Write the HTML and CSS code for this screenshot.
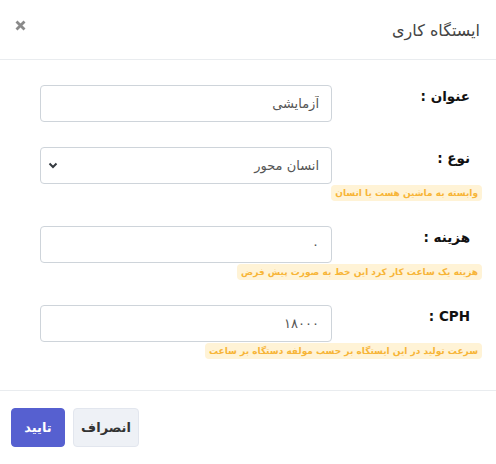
FILE: index.html
```html
<!DOCTYPE html>
<html lang="fa" dir="rtl">
<head>
<meta charset="utf-8">
<link rel="stylesheet" href="styles.css">
</head>
<body>
<div class="modal">
  <div class="modal-header">
    <h5 class="modal-title">ایستگاه کاری</h5>
    <button class="close" type="button" aria-label="Close">
      <svg width="11" height="11" viewBox="0 0 11 11"><path d="M1.5 1.5 L9.5 9.5 M9.5 1.5 L1.5 9.5" stroke="#8a8a8a" stroke-width="2.8" stroke-linecap="butt"/></svg>
    </button>
  </div>
  <div class="modal-body">
    <div class="group">
      <div class="row">
        <label class="label">عنوان :</label>
        <div class="field"><input class="input" type="text" value="آزمایشی"></div>
      </div>
    </div>
    <div class="group">
      <div class="row">
        <label class="label">نوع :</label>
        <div class="field">
          <div class="select">
            <span class="select-text">انسان محور</span>
            <svg class="chev" width="10" height="7" viewBox="0 0 10 7"><path d="M1.5 1.5 L5 5 L8.5 1.5" fill="none" stroke="#343a40" stroke-width="2"/></svg>
          </div>
        </div>
      </div>
      <div class="hint-row"><span class="hint">وابسته به ماشین هست یا انسان</span></div>
    </div>
    <div class="group">
      <div class="row">
        <label class="label">هزینه :</label>
        <div class="field"><input class="input" type="text" value="۰"></div>
      </div>
      <div class="hint-row"><span class="hint">هزینه یک ساعت کار کرد این خط به صورت پیش فرض</span></div>
    </div>
    <div class="group last">
      <div class="row">
        <label class="label">CPH :</label>
        <div class="field"><input class="input" type="text" value="۱۸۰۰۰"></div>
      </div>
      <div class="hint-row"><span class="hint">سرعت تولید در این ایستگاه بر حسب مولفه دستگاه بر ساعت</span></div>
    </div>
  </div>
  <div class="modal-footer">
    <button class="btn btn-primary" type="button">تایید</button>
    <button class="btn btn-cancel" type="button">انصراف</button>
  </div>
</div>
</body>
</html>
```
FILE: styles.css
```css
* { box-sizing: border-box; }
html, body {
  margin: 0;
  padding: 0;
  background: #ffffff;
}
body {
  font-family: "DejaVu Sans", "Noto Sans", sans-serif;
  color: #212529;
  width: 496px;
  height: 464px;
  overflow: hidden;
}
.modal {
  width: 496px;
  height: 464px;
  background: #fff;
  display: flex;
  flex-direction: column;
}
.modal-header {
  height: 60px;
  border-bottom: 1px solid #e9ecef;
  display: flex;
  align-items: center;
  justify-content: space-between;
  padding: 0 16px 0 15px;
}
.modal-title {
  margin: 0;
  font-size: 16px;
  font-weight: normal;
  color: #444;
  padding-top: 2px;
}
.close {
  border: 0;
  background: transparent;
  padding: 0;
  width: 11px;
  height: 11px;
  margin-bottom: 9px;
  display: flex;
  align-items: center;
  justify-content: center;
}
.modal-body {
  padding: 25px 14px 0 14px;
  height: 331px;
  border-bottom: 1px solid #e9ecef;
}
.group {
  margin-bottom: 25px;
}
.group.last { margin-bottom: 0; }
.row {
  display: flex;
  align-items: flex-start;
}
.label {
  width: 150px;
  padding-right: 12px;
  padding-top: 1px;
  font-weight: bold;
  font-size: 13.5px;
  line-height: 20px;
  color: #111;
}
.field {
  width: 292px;
}
.input, .select {
  width: 292px;
  height: 37px;
  border: 1px solid #ced4da;
  border-radius: 4px;
  padding: 0 12px;
  font-family: inherit;
  font-size: 13px;
  color: #555;
  text-align: right;
  direction: rtl;
  background: #fff;
  outline: none;
}
.select {
  display: flex;
  align-items: center;
  justify-content: space-between;
  padding: 0 12px 0 7px;
}
.select-text { color: #555; }
.chev { display: block; }
.hint-row {
  display: flex;
  margin-top: 1px;
}
.hint {
  display: inline-block;
  background: #fff3d6;
  color: #f7b538;
  font-weight: bold;
  font-size: 9px;
  line-height: 16px;
  height: 16px;
  padding: 0 4px;
  border-radius: 4px;
  white-space: nowrap;
}
.modal-footer {
  flex: 1;
  display: flex;
  justify-content: flex-start;
  align-items: center;
  gap: 8px;
  padding: 0 11px;
  direction: ltr;
}
.modal-footer .btn { direction: rtl; }
.btn {
  height: 39px;
  border-radius: 4px;
  font-family: inherit;
  font-weight: bold;
  font-size: 13px;
  padding: 0;
  cursor: pointer;
}
.btn-primary {
  width: 54px;
  background: #5660d0;
  border: 1px solid #5660d0;
  color: #fff;
}
.btn-cancel {
  width: 66px;
  background: #eef1f6;
  border: 1px solid #e2e6ee;
  color: #333;
}
```
